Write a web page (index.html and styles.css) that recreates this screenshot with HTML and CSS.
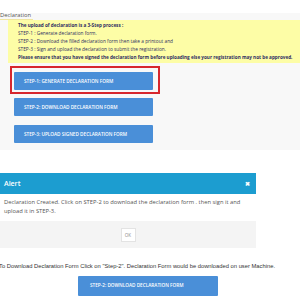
FILE: index.html
```html
<!DOCTYPE html>
<html>
<head>
<meta charset="utf-8">
<link rel="stylesheet" href="styles.css">
</head>
<body>
<div class="tabbar"><span class="tab">Declaration</span></div>
<div class="panel">
  <div class="notice">
    <div class="b">The upload of declaration is a 3-Step process :</div>
    <div>STEP-1 : Generate declaration form.</div>
    <div>STEP-2 : Download the filled declaration form then take a printout and</div>
    <div>STEP-3 : Sign and upload the declaration to submit the registration.</div>
    <div class="b">Please ensure that you have signed the declaration form before uploading else your registration may not be approved.</div>
  </div>
  <div class="steps">
    <div class="highlight"><div class="btn">STEP-1: GENERATE DECLARATION FORM</div></div>
    <div class="btn">STEP-2: DOWNLOAD DECLARATION FORM</div>
    <div class="btn">STEP-3: UPLOAD SIGNED DECLARATION FORM</div>
  </div>
</div>
<div class="alert">
  <div class="alert-head"><span>Alert</span><span class="close">&#x2716;</span></div>
  <div class="alert-body">Declaration Created. Click on STEP-2 to download the declaration form . then sign it and upload it in STEP-3.</div>
  <div class="alert-foot"><span class="ok">OK</span></div>
</div>
<div class="bottom">
  <p class="info">To Download Declaration Form Click on "Step-2". Declaration Form would be downloaded on user Machine.</p>
  <div class="btn wide">STEP-2: DOWNLOAD DECLARATION FORM</div>
</div>
</body>
</html>
```
FILE: styles.css
```css
* { box-sizing: border-box; }
html, body { margin: 0; padding: 0; background: #fff; overflow: hidden; }
body { width: 300px; height: 297px; font-family: "Open Sans", "Liberation Sans", sans-serif; }

.tabbar { height: 13px; background: #fff; position: relative; }
.tab {
  display: inline-block;
  font-size: 5.8px;
  color: #555;
  line-height: 8px;
  margin-top: -1px;
  padding: 0 2px 0 0;
  border-bottom: 1.5px solid #f1e6a0;
}

.panel { background: #f8f8f8; padding: 7px 0 8px; height: 137px; }
.notice {
  margin-left: 8px;
  background: #fdfda6;
  color: #2f2f62;
  font-size: 4.75px;
  line-height: 8px;
  padding: 1px 4px 2px 10px;
  white-space: nowrap;
  font-family: "Open Sans", sans-serif;
}
.notice .b { font-weight: 700; font-size: 4.65px; }

.steps { padding-left: 14px; margin-top: 3px; display: flex; flex-direction: column; align-items: flex-start; }
.highlight {
  margin-left: -4px;
  width: 150px;
  border: 2px solid #d7272d;
  padding: 4px 5px 2px 2px;
  margin-bottom: 4px;
}
.btn {
  width: 139px;
  height: 18px;
  background: #4a8fd8;
  color: #fff;
  font-family: "Open Sans", sans-serif;
  font-size: 4.7px;
  font-weight: 600;
  line-height: 18px;
  padding-left: 10px;
  white-space: nowrap;
  border-radius: 1px;
}
.steps > .btn + .btn { margin-top: 9px; }

.alert { margin-top: 23px; width: 256px; }
.alert-head {
  height: 21px;
  background: #1c9dd0;
  color: #fff;
  font-size: 7px;
  font-weight: 600;
  display: flex;
  justify-content: space-between;
  align-items: center;
  padding: 0 6px 0 4px;
}
.close { font-size: 5.5px; font-weight: 700; }
.alert-body {
  background: #fff;
  color: #555;
  font-size: 5.8px;
  line-height: 9px;
  padding: 4px 4px 0 4px;
  height: 27px;
}
.alert-foot {
  height: 27px;
  background: #f4f4f4;
  display: flex;
  justify-content: center;
  align-items: center;
}
.ok {
  width: 15px;
  height: 14px;
  background: #fff;
  border: 1px solid #e3e3e3;
  color: #888;
  font-size: 4.5px;
  display: flex;
  justify-content: center;
  align-items: center;
}

.bottom { padding-top: 14px; }
.info {
  margin: 0 0 0 -1px;
  font-family: "Liberation Sans", Arial, sans-serif;
  font-size: 5.8px;
  color: #333;
  line-height: 8px;
  white-space: nowrap;
}
.btn.wide { margin: 6px 0 0 78px; width: 140px; padding-left: 12px; height: 20px; line-height: 19px; }
```
